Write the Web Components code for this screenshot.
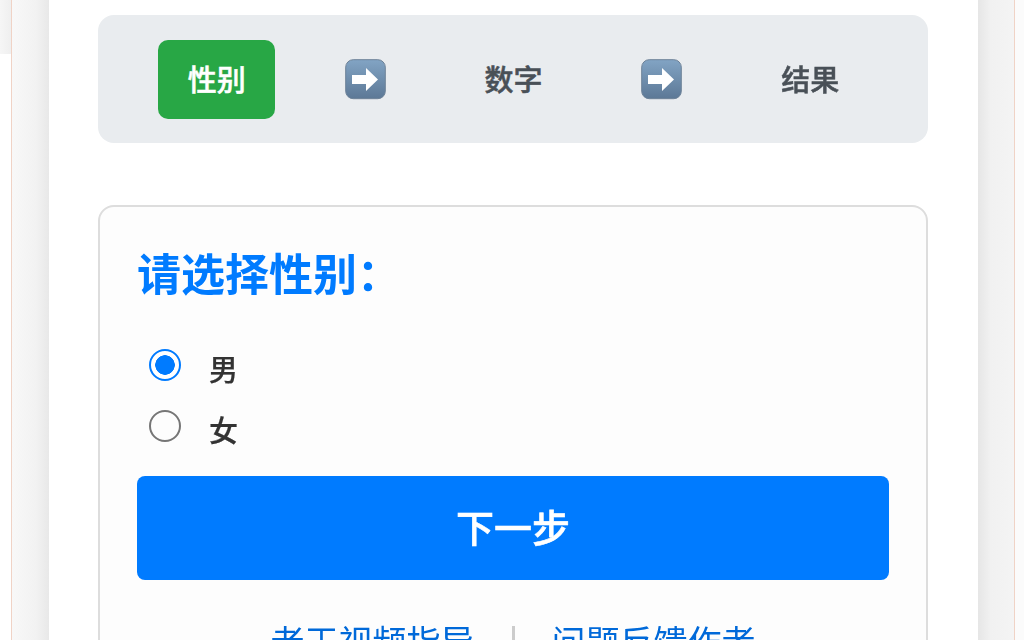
<!DOCTYPE html>
<html lang="zh">
<head>
<meta charset="utf-8">
<title>性别</title>
<style>
  html, body { margin: 0; height: 640px; overflow: hidden; background: #fff; }
  body { font-family: "Noto Sans CJK SC", "Liberation Sans", sans-serif; color: #333; }
</style>
</head>
<body>
<x-page>
  <x-stepper>
    <x-step active>性别</x-step>
    <x-arrow></x-arrow>
    <x-step>数字</x-step>
    <x-arrow></x-arrow>
    <x-step>结果</x-step>
  </x-stepper>
  <x-card>
    <h2 slot="title">请选择性别：</h2>
    <x-radio checked>男</x-radio>
    <x-radio>女</x-radio>
    <x-button>下一步</x-button>
    <x-links>
      <a>老王视频指导</a>
      <a>问题反馈作者</a>
    </x-links>
  </x-card>
</x-page>

<script>
(() => {
  var define = (name, markup) => {
    var template = document.createElement("template");
    template.innerHTML = markup;
    customElements.define(name, class extends HTMLElement {
      constructor() {
        super();
        this.attachShadow({ mode: "open" }).appendChild(template.content.cloneNode(true));
      }
    });
  };

  define("x-page", `
    <style>
      :host { display: flex; height: 640px; overflow: hidden; filter: blur(.35px); }
      .outer { flex: none; width: 11px; }
      .outer.left { background: linear-gradient(90deg, #f6f6f6, #efefef) 0 0 / 100% 54px no-repeat, #fff; }
      .outer.right { background: #fbfbfb; flex: 1; }
      .gutter { flex: none; width: 37px; background: linear-gradient(90deg, #f8f8f8, #f2f2f2 65%, #e8e8e8); border-left: 1px solid #f0d3c6; }
      .gutter.right { background: linear-gradient(90deg, #e6e6e6, #f1f1f1 35%, #f4f4f4); border-left: 0; border-right: 1px solid #f0d3c6; width: 36px; }
      main { flex: none; width: 929px; box-sizing: border-box; padding: 15px 50px 0 49px; background: #fff; }
    </style>
    <div class="outer left"></div>
    <div class="gutter"></div>
    <main><slot></slot></main>
    <div class="gutter right"></div>
    <div class="outer right"></div>
  `);

  define("x-stepper", `
    <style>
      :host { display: grid; grid-template-columns: repeat(5, 1fr); align-items: center; justify-items: center;
        height: 128px; box-sizing: border-box; padding: 0 43.5px 0 44.5px; margin-bottom: 62px;
        background: #e9ecef; border-radius: 16px; }
    </style>
    <slot></slot>
  `);

  define("x-step", `
    <style>
      :host { display: block; padding: 0 29.5px; height: 79px; line-height: 77px; border-radius: 10px;
        font-size: 29px; font-weight: 500; -webkit-text-stroke: .5px currentColor; color: #495057; white-space: nowrap; }
      :host([active]) { background: #28a745; color: #fff; }
    </style>
    <slot></slot>
  `);

  define("x-arrow", `
    <style>
      :host { display: block; width: 41px; height: 41px; }
      svg { display: block; }
    </style>
    <svg width="41" height="41" viewBox="0 0 41 41">
      <defs>
        <linearGradient id="key" x1="0" y1="0" x2="0" y2="1">
          <stop offset="0" stop-color="#82a4c4"/>
          <stop offset="1" stop-color="#5c7896"/>
        </linearGradient>
      </defs>
      <rect x=".7" y=".7" width="39.6" height="39" rx="7.5" fill="url(#key)" stroke="#6d8298" stroke-width="1"/>
      <path d="M7 16H21V9L33 20.5L21 32V25H7Z" fill="#fff"/>
    </svg>
  `);

  define("x-card", `
    <style>
      :host { display: block; box-sizing: border-box; height: 600px; padding: 0 37px;
        background: #fdfdfd; border: 2px solid #ddd; border-radius: 16px; }
      ::slotted(h2) { margin: 34px 0 46px; font-size: 44px; line-height: 62px; font-weight: 700; color: #007bff; }
    </style>
    <slot name="title"></slot>
    <slot></slot>
  `);

  define("x-radio", `
    <style>
      :host { display: flex; align-items: flex-start; height: 61px; padding-left: 12px; font-size: 29px; font-weight: 500; -webkit-text-stroke: .25px currentColor; color: #333; }
      .dot { flex: none; box-sizing: border-box; width: 32px; height: 32px; border-radius: 50%; border: 2px solid #767676; margin-right: 28px; }
      :host([checked]) .dot { border: 2.5px solid #007bff; background: radial-gradient(circle, #007bff 0 9.5px, #fff 10px); }
      span { line-height: 38px; }
    </style>
    <i class="dot"></i><span><slot></slot></span>
  `);

  define("x-button", `
    <style>
      :host { display: block; height: 104px; line-height: 100px; text-align: center; margin-top: 5px;
        background: #007bff; color: #fff; border-radius: 8px; font-size: 38px; font-weight: 500; -webkit-text-stroke: .6px currentColor; }
    </style>
    <slot></slot>
  `);

  define("x-links", `
    <style>
      :host { display: flex; justify-content: center; align-items: center; margin-top: 37px; font-size: 34px; line-height: 48px; color: #0069d9; }
      ::slotted(a) { color: inherit; }
      i { flex: none; width: 3px; height: 30px; margin: 0 37px; background: #ccc; }
    </style>
    <slot name="a"></slot><i></i><slot></slot>
  `);

  // the first link goes before the separator
  document.querySelector("x-links a").slot = "a";
})();
</script>
</body>
</html>
